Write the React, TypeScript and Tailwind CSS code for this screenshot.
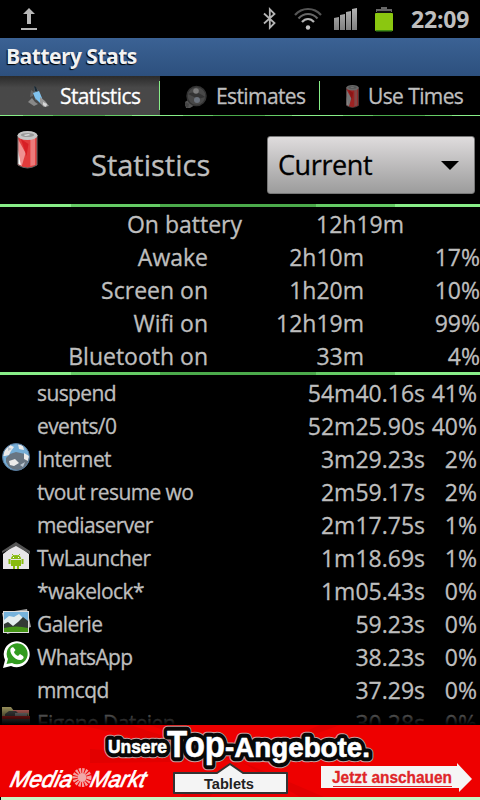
import React from 'react';

interface StatRow {
  label: string;
  time: string;
  percent: string;
}

interface ProcessRow {
  name: string;
  time: string;
  percent: string;
  icon?: React.ReactNode;
}

const UploadIcon = () => (
  <svg width="18" height="24" viewBox="0 0 18 24" fill="#b8b8b8">
    <path d="M8 1 14 7H10V17H6V7H2z" />
    <path d="M0 21h16v2H0z" />
  </svg>
);

const BluetoothIcon = () => (
  <svg width="14" height="24" viewBox="0 0 14 24" fill="none" stroke="#b4b4b4" strokeWidth="1.8">
    <path d="M1 6.500 11.500 16 6.800 20.800V2.200L11.500 7 1 16.500" />
  </svg>
);

const WifiIcon = () => (
  <svg width="28" height="24" viewBox="0 0 28 24" fill="none" strokeWidth="2.2">
    <path d="M1 8C8 0 20 0 27 8" stroke="#555" />
    <path d="M4.500 11.500C10 5.500 18 5.500 23.500 11.500" stroke="#666" />
    <path d="M8 15C11.500 11 16.500 11 20 15" stroke="#b4b4b4" />
    <circle cx="14" cy="20.500" r="2.200" fill="#c4c4c4" />
  </svg>
);

const SignalIcon = () => (
  <svg width="24" height="24" viewBox="0 0 24 24">
    <defs>
      <linearGradient id="signal" x1="0" x2="0" y1="0" y2="1">
        <stop offset="0" stopColor="#b4b4b4" />
        <stop offset="1" stopColor="#808080" />
      </linearGradient>
    </defs>
    <g fill="url(#signal)">
      <path d="M0 11l5-1v13H0zM6 8l5-1v16H6zM12 5l5-1v19h-5zM18 2l5-1v22h-5z" />
    </g>
  </svg>
);

const BatteryIcon = () => (
  <svg width="18" height="25" viewBox="0 0 18 25">
    <path d="M1 5V2h5V0h6v2h5v3z" fill="#666" />
    <path d="M2 4h14v2H2z" fill="#111" />
    <rect x="0" y="6" width="18" height="18" rx="1" fill="#8bc710" />
    <path d="M1 23h16v1.500H1z" fill="#3d8a14" />
  </svg>
);

const CanIcon = ({ className, dim }: { className: string; dim?: boolean }) => (
  <svg className={className} viewBox="0 0 22 38" preserveAspectRatio="none">
    <path d="M1 4v30q10 6 20 0V4z" fill={dim ? '#9d2222' : '#e13c3c'} />
    <path d="M1 8l8 14-4 13-4-2z" fill={dim ? '#777' : '#ef9292'} />
    <path d="M1 19l3 15-3-1z" fill={dim ? '#888' : '#fff'} />
    <path d="M14 6l5-1v29l-5 1z" fill={dim ? '#696969' : '#ef8b8b'} opacity={dim ? 0.5 : 0.8} />
    <path d="M4 8l8 5-2 12z" fill={dim ? '#8b1515' : '#d81f25'} />
    <path d="M1 4v30q10 6 20 0V4" fill="none" stroke={dim ? '#555' : '#666'} />
    <ellipse cx="11" cy="4.500" rx="10.500" ry="4.500" fill={dim ? '#686868' : '#c6c6c6'} />
    <ellipse cx="11" cy="4" rx="7" ry="2" fill={dim ? '#555' : '#9a9a9a'} />
    <path d="M7 4l5-1 2 1-5 1z" fill={dim ? '#777' : '#ddd'} />
  </svg>
);

const WizardIcon = () => (
  <svg width="22" height="24" viewBox="0 0 22 24">
    <path d="M6 1l3 3 3 4 2 8-7-1z" fill="#5a6a75" />
    <path d="M6 1l2 1 2 5-3-1z" fill="#1b2933" />
    <path d="M0 17l4-4 3 4 3 2-4 2z" fill="#888" />
    <path d="M3 5l3 2-1 4-3 1z" fill="#666" />
    <path d="M5 8l6-2 3 7 1 6-3-1-5-5z" fill="#80c3ef" />
    <path d="M12 12l5 4 4 5-5 1-4-4z" fill="#999" />
    <path d="M15 17l4 2-1 3-3-2z" fill="#d8d8d8" />
  </svg>
);

const CrystalBallIcon = () => (
  <svg width="23" height="24" viewBox="0 0 23 24">
    <path d="M1 17l3-2 7 5-5 3-4 0z" fill="#555" />
    <circle cx="12.500" cy="11" r="9.500" fill="#484848" stroke="#333" strokeWidth="1.500" />
    <path d="M4 9q8-4 17 3l-7 2z" fill="#333" />
    <circle cx="12" cy="6" r="2.800" fill="#7b7b7b" />
    <circle cx="13" cy="15" r="3" fill="#6b727c" />
    <path d="M1 17l4 2-1 4-3-2z" fill="#444" />
  </svg>
);

const GlobeIcon = () => (
  <svg width="28" height="28" viewBox="0 0 28 28">
    <circle cx="14" cy="14" r="13.500" fill="#75add6" />
    <path d="M4 15l4-4 6-2 9 2 4 5q-2 9-10 11-9 1-13-8z" fill="#687582" />
    <path d="M1 13l2-6 5-5 4 2-3 4-2 4-4 1zM16 1l5 2 1 4-5-1zM22 10l5 3-1 5-4-2zM7 18l6-2 4 4-5 3-4-1z" fill="#ecebea" />
    <path d="M6 4l4 2-4 2zM18 22l5-3-2 5z" fill="#b7c4cf" />
    <circle cx="14" cy="14" r="13.500" fill="none" stroke="#58799a" />
  </svg>
);

const LauncherIcon = () => (
  <svg width="28" height="28" viewBox="0 0 28 28">
    <path d="M1 12L14 2l13 10v15H1z" fill="#e8e6e8" />
    <path d="M0 11V9L14 0l14 9v3L14 4z" fill="#555" />
    <path d="M9 17q0-4 5-4t5 4zM9 18h10v6H9zM6.500 17h2v5h-2zM19.500 17h2v5h-2zM11 24h2v3h-2zM15 24h2v3h-2z" fill="#88bb11" />
    <path d="M10 12l2 2M18 12l-2 2" stroke="#88bb11" />
    <path d="M11 15h1v1h-1zM16 15h1v1h-1z" fill="#fff" />
  </svg>
);

const GalleryIcon = () => (
  <svg width="29" height="27" viewBox="0 0 29 27">
    <path d="M0 5l25-4 4 18-24 7z" fill="#aaa" />
    <path d="M1 3h26v22H1z" fill="#ddd" />
    <path d="M2 4h24v18H2z" fill="#76b3dc" />
    <path d="M2 12l5-4 5 1 5-3 7 7-4 6H2z" fill="#e5eeee" />
    <path d="M2 16l4-2 5 4 5-4 5-5 5 4v9H2z" fill="#333a35" />
    <path d="M2 20q12-3 24 0v4H2z" fill="#459516" />
  </svg>
);

const WhatsAppIcon = () => (
  <svg width="28" height="28" viewBox="0 0 28 28">
    <path d="M1 27l2-8A13 13 0 1 1 9 25z" fill="#fff" />
    <path d="M4.500 23l1.500-5A10.500 10.500 0 1 1 10 22z" fill="#329b20" />
    <path d="M9 7c-3 4 4 13 10 12 3-1 3-3 2-4l-3-2-2 2c-2-.5-4-3-4-4l1.500-2L11 6z" fill="#fff" />
  </svg>
);

const FolderIcon = () => (
  <svg width="28" height="18" viewBox="0 0 28 18">
    <path d="M0 0h9l3 4h15v5H0z" fill="#c8bd78" />
    <path d="M11 3h16v3H11z" fill="#f7837b" />
    <path d="M3 7l4-3h7l3 3 8-1 2 5H3z" fill="#555" />
    <path d="M13 6h12v3H13z" fill="#aaa" />
    <path d="M0 9h28v3H0z" fill="#f02424" />
    <path d="M0 12h28v6H0z" fill="#777" />
  </svg>
);

const GreenLine = () => (
  <div className="flex h-[3px] shrink-0">
    <div className="w-[71px] bg-[#88ee88]" />
    <div className="w-[89px] bg-[#66cc66]" />
    <div className="w-[156px] bg-[#4baa4b]" />
    <div className="w-[79px] bg-[#66cc66]" />
    <div className="flex-1 bg-[#88ee88]" />
  </div>
);

const batteryStats: StatRow[] = [
  { label: 'Awake', time: '2h10m', percent: '17%' },
  { label: 'Screen on', time: '1h20m', percent: '10%' },
  { label: 'Wifi on', time: '12h19m', percent: '99%' },
  { label: 'Bluetooth on', time: '33m', percent: '4%' },
];

const processes: ProcessRow[] = [
  { name: 'suspend', time: '54m40.16s', percent: '41%' },
  { name: 'events/0', time: '52m25.90s', percent: '40%' },
  { name: 'Internet', time: '3m29.23s', percent: '2%', icon: <GlobeIcon /> },
  { name: 'tvout resume wo', time: '2m59.17s', percent: '2%' },
  { name: 'mediaserver', time: '2m17.75s', percent: '1%' },
  { name: 'TwLauncher', time: '1m18.69s', percent: '1%', icon: <LauncherIcon /> },
  { name: '*wakelock*', time: '1m05.43s', percent: '0%' },
  { name: 'Galerie', time: '59.23s', percent: '0%', icon: <GalleryIcon /> },
  { name: 'WhatsApp', time: '38.23s', percent: '0%', icon: <WhatsAppIcon /> },
  { name: 'mmcqd', time: '37.29s', percent: '0%' },
  { name: 'Eigene Dateien', time: '30.28s', percent: '0%', icon: <FolderIcon /> },
];

const tabs = [
  { name: 'Statistics', icon: <WizardIcon />, pad: 'pl-7', gap: 'gap-[10px]' },
  { name: 'Estimates', icon: <CrystalBallIcon />, pad: 'pl-6', gap: 'gap-[9px]' },
  { name: 'Use Times', icon: <CanIcon className="h-[23px] w-[13px]" dim />, pad: 'pl-[26px]', gap: 'gap-[9px]' },
];

const Banner = () => (
  <svg className="block h-[72px] w-[480px]" viewBox="0 0 480 72">
    <rect width="480" height="72" fill="#ee0000" />
    <path d="M240 36L80 0h50zM240 36L150 0h30zM240 36L320 0h20zM240 36L180 72h30zM240 36L90 24v14zM240 36L300 72h24z" fill="#d50000" opacity=".5" />
    <g fontFamily="Liberation Sans, sans-serif" fontWeight="bold" strokeLinejoin="round">
      {[
        { stroke: '#c9a0a0', width: 10.5 },
        { stroke: '#080808', width: 8.5 },
        { stroke: '#fff', width: 0.6 },
      ].map((layer, i) => (
        <g key={i} fill="#fff" stroke={layer.stroke} strokeWidth={layer.width} aria-hidden={i < 2}>
          <text x="108" y="27.5" fontSize="19" textLength="59" lengthAdjust="spacingAndGlyphs">Unsere</text>
          <text x="167" y="32" fontSize="37" textLength="58" lengthAdjust="spacingAndGlyphs">Top</text>
          <text x="225" y="32" fontSize="27" textLength="145" lengthAdjust="spacingAndGlyphs">-Angebote.</text>
        </g>
      ))}
      <path d="M174 48h43l13-9 13 9h44v20H174z" fill="#f4f4f4" stroke="#333" strokeWidth="2" />
      <text x="204" y="63.500" fontSize="14.5" textLength="50" lengthAdjust="spacingAndGlyphs" fill="#222">Tablets</text>
      <path d="M321 41h136v-3l15 16-13 13v-4H321z" fill="#f5f5f5" />
      <text x="332" y="58" fontSize="16" textLength="120" lengthAdjust="spacingAndGlyphs" fill="#df2529" stroke="#df2529" strokeWidth=".3">Jetzt anschauen</text>
      <path d="M333 61.500h119" stroke="#df2529" />
    </g>
    <g fill="#fff" fontFamily="Liberation Sans, sans-serif" stroke="#fff" strokeWidth=".7" fontStyle="italic" fontSize="23">
      <text transform="translate(9 61.500) skewX(-14)" textLength="62" lengthAdjust="spacingAndGlyphs">Media</text>
      <text transform="translate(89 61.500) skewX(-14)" textLength="55" lengthAdjust="spacingAndGlyphs">Markt</text>
    </g>
    <circle cx="82" cy="52.500" r="7" fill="none" stroke="#f5a0a0" strokeWidth="5" strokeDasharray="2 1" />
    <circle cx="82" cy="52.500" r="4.500" fill="#f0a8a8" />
  </svg>
);

const App: React.FC = () => {
  return (
    <div className="flex h-[800px] w-[480px] flex-col overflow-hidden bg-black font-['Open_Sans','Noto_Sans',sans-serif] text-[#bebebe]">
      <div className="flex h-[38px] shrink-0 items-center pr-[10px] pl-[21px]">
        <UploadIcon />
        <div className="ml-auto flex items-center">
          <BluetoothIcon />
          <div className="ml-[17px]"><WifiIcon /></div>
          <div className="ml-[12px]"><SignalIcon /></div>
          <div className="ml-[17px]"><BatteryIcon /></div>
          <span className="ml-[18px] w-[59px] text-[23px] font-bold tracking-[-0.2px]">22:09</span>
        </div>
      </div>

      <div className="flex h-[38px] shrink-0 items-center bg-linear-to-b from-[#3b6294] to-[#2d507e] pl-[6px]">
        <h1 className="text-[21px] font-bold tracking-[-0.5px] text-[#f2f2f2] [text-shadow:-1px_1px_1px_#000]">Battery Stats</h1>
      </div>

      <div className="flex h-[39px] shrink-0">
        {tabs.map((tab, i) => (
          <div
            key={tab.name}
            className={`relative flex w-40 items-center pt-[2px] whitespace-nowrap ${tab.pad} ${tab.gap} ${i === 0 ? 'bg-linear-to-b from-[#2b2b2b] to-[#484848] to-30% text-white' : ''}`}
          >
            {tab.icon}
            <span className="text-[21px] tracking-[-0.6px] [-webkit-text-stroke:0.3px]">{tab.name}</span>
            {i < 2 && <div className="absolute top-[5px] right-0 h-[29px] w-px bg-[#88ee88]" />}
          </div>
        ))}
      </div>
      <div className="flex h-px shrink-0">
        {tabs.map((tab) => (
          <div key={tab.name} className="flex w-40">
            <div className="w-[23px] bg-[#88ee88]" />
            <div className="w-[30px] bg-[#66cc66]" />
            <div className="w-[52px] bg-[#4baa4b]" />
            <div className="w-[27px] bg-[#66cc66]" />
            <div className="flex-1 bg-[#88ee88]" />
          </div>
        ))}
      </div>

      <div className="flex h-[88px] shrink-0 items-center pr-[5px] pl-[17px]">
        <CanIcon className="mb-[20px] h-[38px] w-[21px]" />
        <span className="ml-[53px] pt-[9px] text-[29px] [-webkit-text-stroke:0.3px]">Statistics</span>
        <div className="mt-[9px] ml-auto flex h-[58px] w-[208px] items-center rounded-[3px] border border-[#777] bg-linear-to-b from-[#dfdcdd] to-[#9c9c9c] pr-[15px] pl-[10px]">
          <span className="pt-[2px] text-[27px] tracking-[-0.4px] text-black [-webkit-text-stroke:0.3px]">Current</span>
          <svg className="mt-[2px] ml-auto" width="18" height="9" viewBox="0 0 18 9">
            <path d="M0 0h18L9 9z" fill="#000" />
          </svg>
        </div>
      </div>
      <GreenLine />

      <div className="shrink-0 text-[23px] leading-[35px] [-webkit-text-stroke:0.3px]">
        <div className="flex h-[33px] text-right">
          <span className="w-[242px]">On battery</span>
          <span className="w-[162px]">12h19m</span>
        </div>
        {batteryStats.map((row) => (
          <div key={row.label} className="flex h-[33px] text-right">
            <span className="w-[208px]">{row.label}</span>
            <span className="w-[156px]">{row.time}</span>
            <span className="w-[116px]">{row.percent}</span>
          </div>
        ))}
      </div>
      <GreenLine />

      <div className="relative h-[350px] shrink-0 overflow-hidden">
        {processes.map((row) => (
          <div key={row.name} className="flex h-[33px] text-[23px] leading-[36px] [-webkit-text-stroke:0.3px]">
            <div className="w-[37px] pt-[2px] pl-[2px]">{row.icon}</div>
            <span className="text-[21px] tracking-[-0.6px]">{row.name}</span>
            <span className="ml-auto">{row.time}</span>
            <span className="w-[55px] pr-[3px] text-right">{row.percent}</span>
          </div>
        ))}
        <div className="absolute inset-x-0 bottom-0 h-[24px] bg-linear-to-b from-transparent to-black" />
      </div>

      <Banner />
      <div className="ml-px h-[3px] bg-[#c9f5c4]" />
    </div>
  );
};

export default App;
